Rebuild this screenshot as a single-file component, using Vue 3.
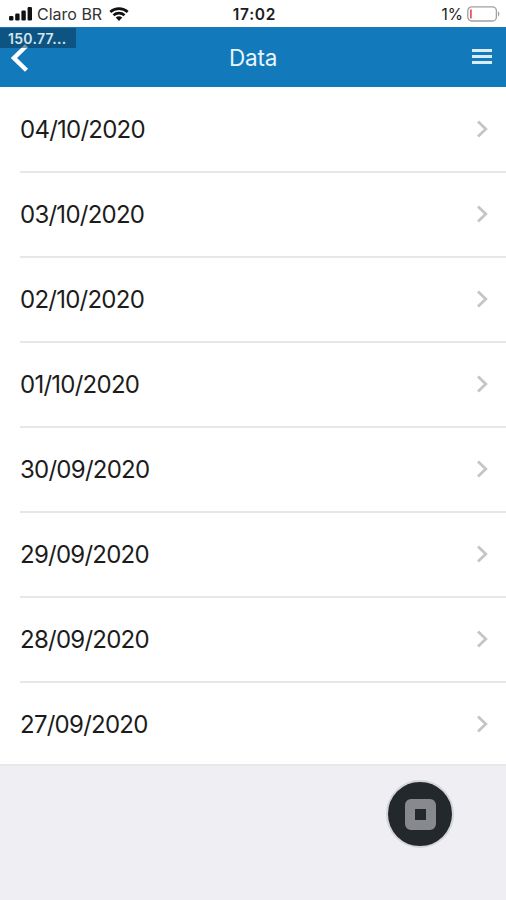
<template>
  <div class="screen">
    <div class="status-bar">
      <div class="carrier">
        <svg class="signal" width="24" height="14" viewBox="0 0 24 14">
          <rect x="0" y="9" width="4.400" height="4.500" rx="1.200" />
          <rect x="6.200" y="6.500" width="4.400" height="7" rx="1.200" />
          <rect x="12.400" y="3.500" width="4.400" height="10" rx="1.200" />
          <rect x="18.600" y="0" width="4.400" height="13.500" rx="1.200" />
        </svg>
        <span class="carrier-name">Claro BR</span>
        <svg class="wifi" width="20" height="14" viewBox="0 0 20 14">
          <path d="M1.300 4.900C6.100 0.600 13.900 0.600 18.700 4.900" />
          <path d="M4.500 8.200C7.600 5.500 12.400 5.500 15.500 8.200" />
          <path class="dot" d="M6.700 10.500C8.700 8.800 11.300 8.800 13.300 10.500L10 13.900Z" />
        </svg>
      </div>
      <div class="clock">17:02</div>
      <div class="battery">
        <span class="percent">1%</span>
        <svg width="33" height="16" viewBox="0 0 33 16">
          <rect class="shell" x="0.800" y="0.800" width="28.600" height="14.200" rx="4" />
          <rect class="level" x="3" y="3.200" width="1.800" height="9.400" rx="0.900" />
          <path class="cap" d="M31 5.200C32.800 6 32.800 9.800 31 10.600Z" />
        </svg>
      </div>
    </div>

    <header class="nav-bar">
      <svg class="back" width="18" height="28" viewBox="0 0 18 28">
        <path d="M15.500 1.800L3 14L15.500 26.200" />
      </svg>
      <h1>Data</h1>
      <div class="menu">
        <span></span>
        <span></span>
        <span></span>
      </div>
      <div class="address">150.77...</div>
    </header>

    <ul class="list">
      <li v-for="date in dates" :key="date" class="row">
        <span class="date">{{ date }}</span>
        <svg class="chevron" width="12" height="18" viewBox="0 0 12 18">
          <path d="M2 1.500L9.800 9L2 16.500" />
        </svg>
      </li>
    </ul>

    <button class="record">
      <span class="record-icon"></span>
    </button>
  </div>
</template>

<script setup>
import { ref } from 'vue';

const dates = ref([
  '04/10/2020',
  '03/10/2020',
  '02/10/2020',
  '01/10/2020',
  '30/09/2020',
  '29/09/2020',
  '28/09/2020',
  '27/09/2020'
])
</script>

<style>
body {
  background: #eeeef3;
}
</style>

<style scoped>
.screen {
  position: relative;
  height: 900px;
  overflow: hidden;
  background: #eeeef3;
  font-family: Inter, "Liberation Sans", sans-serif;
  color: #1c1c1c;
}

.status-bar {
  display: grid;
  grid-template-columns: 1fr auto 1fr;
  align-items: center;
  height: 27px;
  padding: 0 6px 0 9px;
  background: #fff;
}

.carrier {
  display: flex;
  align-items: center;
}

.carrier-name {
  margin: 1px 7px 0 4px;
  font-size: 16px;
  line-height: 20px;
  color: #333;
}

.signal,
.wifi .dot {
  fill: #111;
}

.wifi path {
  fill: none;
  stroke: #111;
  stroke-width: 2.7;
}

.wifi path.dot {
  fill: #111;
  stroke: none;
}

.clock {
  margin-top: 2px;
  font-size: 15.5px;
  font-weight: 600;
  letter-spacing: 0.7px;
}

.battery {
  display: flex;
  align-items: center;
  justify-content: flex-end;
  gap: 4px;
}

.percent {
  margin-top: 2px;
  font-size: 15.5px;
}

.shell {
  fill: #fff;
  stroke: #a0a0a0;
  stroke-width: 1.3;
}

.level {
  fill: #ee5360;
}

.cap {
  fill: #a0a0a0;
}

.nav-bar {
  position: relative;
  display: grid;
  grid-template-columns: 1fr auto 1fr;
  align-items: center;
  height: 60px;
  padding: 0 14px 0 11px;
  background: #1279bb;
  color: #fff;
}

.nav-bar h1 {
  margin: 0 0 0 3px;
  font-size: 22.5px;
  font-weight: 400;
  letter-spacing: -0.2px;
  color: #e8f5fc;
}

.back {
  margin-top: 2px;
  fill: none;
  stroke: #fff;
  stroke-width: 4.4;
}

.menu {
  display: flex;
  flex-direction: column;
  gap: 3px;
  justify-self: end;
  width: 20px;
  margin-bottom: 1px;
}

.menu span {
  height: 3px;
  background: #d9edf9;
}

/* address badge lies over the corner of the bar */
.address {
  position: absolute;
  top: 1px;
  left: 0;
  box-sizing: border-box;
  width: 76px;
  height: 20px;
  padding-left: 8px;
  background: rgba(10, 50, 80, 0.52);
  font-size: 14px;
  font-weight: 600;
  line-height: 21px;
  letter-spacing: 0.3px;
  color: #d3e5ef;
}

.list {
  margin: 0;
  padding: 1px 0 0;
  list-style: none;
  background: #fff;
}

.row {
  display: flex;
  align-items: center;
  justify-content: space-between;
  box-sizing: border-box;
  height: 85px;
  margin-left: 20px;
  padding-right: 18px;
  border-bottom: 2px solid #e7e7e9;
}

.row:last-child {
  height: 83px;
  margin-left: 0;
  padding: 2px 18px 0 20px;
}

.date {
  font-size: 24px;
  line-height: 30px;
  letter-spacing: -0.75px;
}

.chevron {
  margin-bottom: 2px;
  fill: none;
  stroke: #c5c5c7;
  stroke-width: 2.8;
}

/* floating button above the page */
.record {
  position: absolute;
  top: 780px;
  left: 386px;
  display: flex;
  align-items: center;
  justify-content: center;
  width: 68px;
  height: 68px;
  padding: 0;
  border: 2px solid #d4d5d8;
  border-radius: 50%;
  background: #23282d;
}

.record-icon {
  box-sizing: border-box;
  width: 31px;
  height: 31px;
  border: 10px solid #88898c;
  border-radius: 6px;
  background: #23282d;
}
</style>
